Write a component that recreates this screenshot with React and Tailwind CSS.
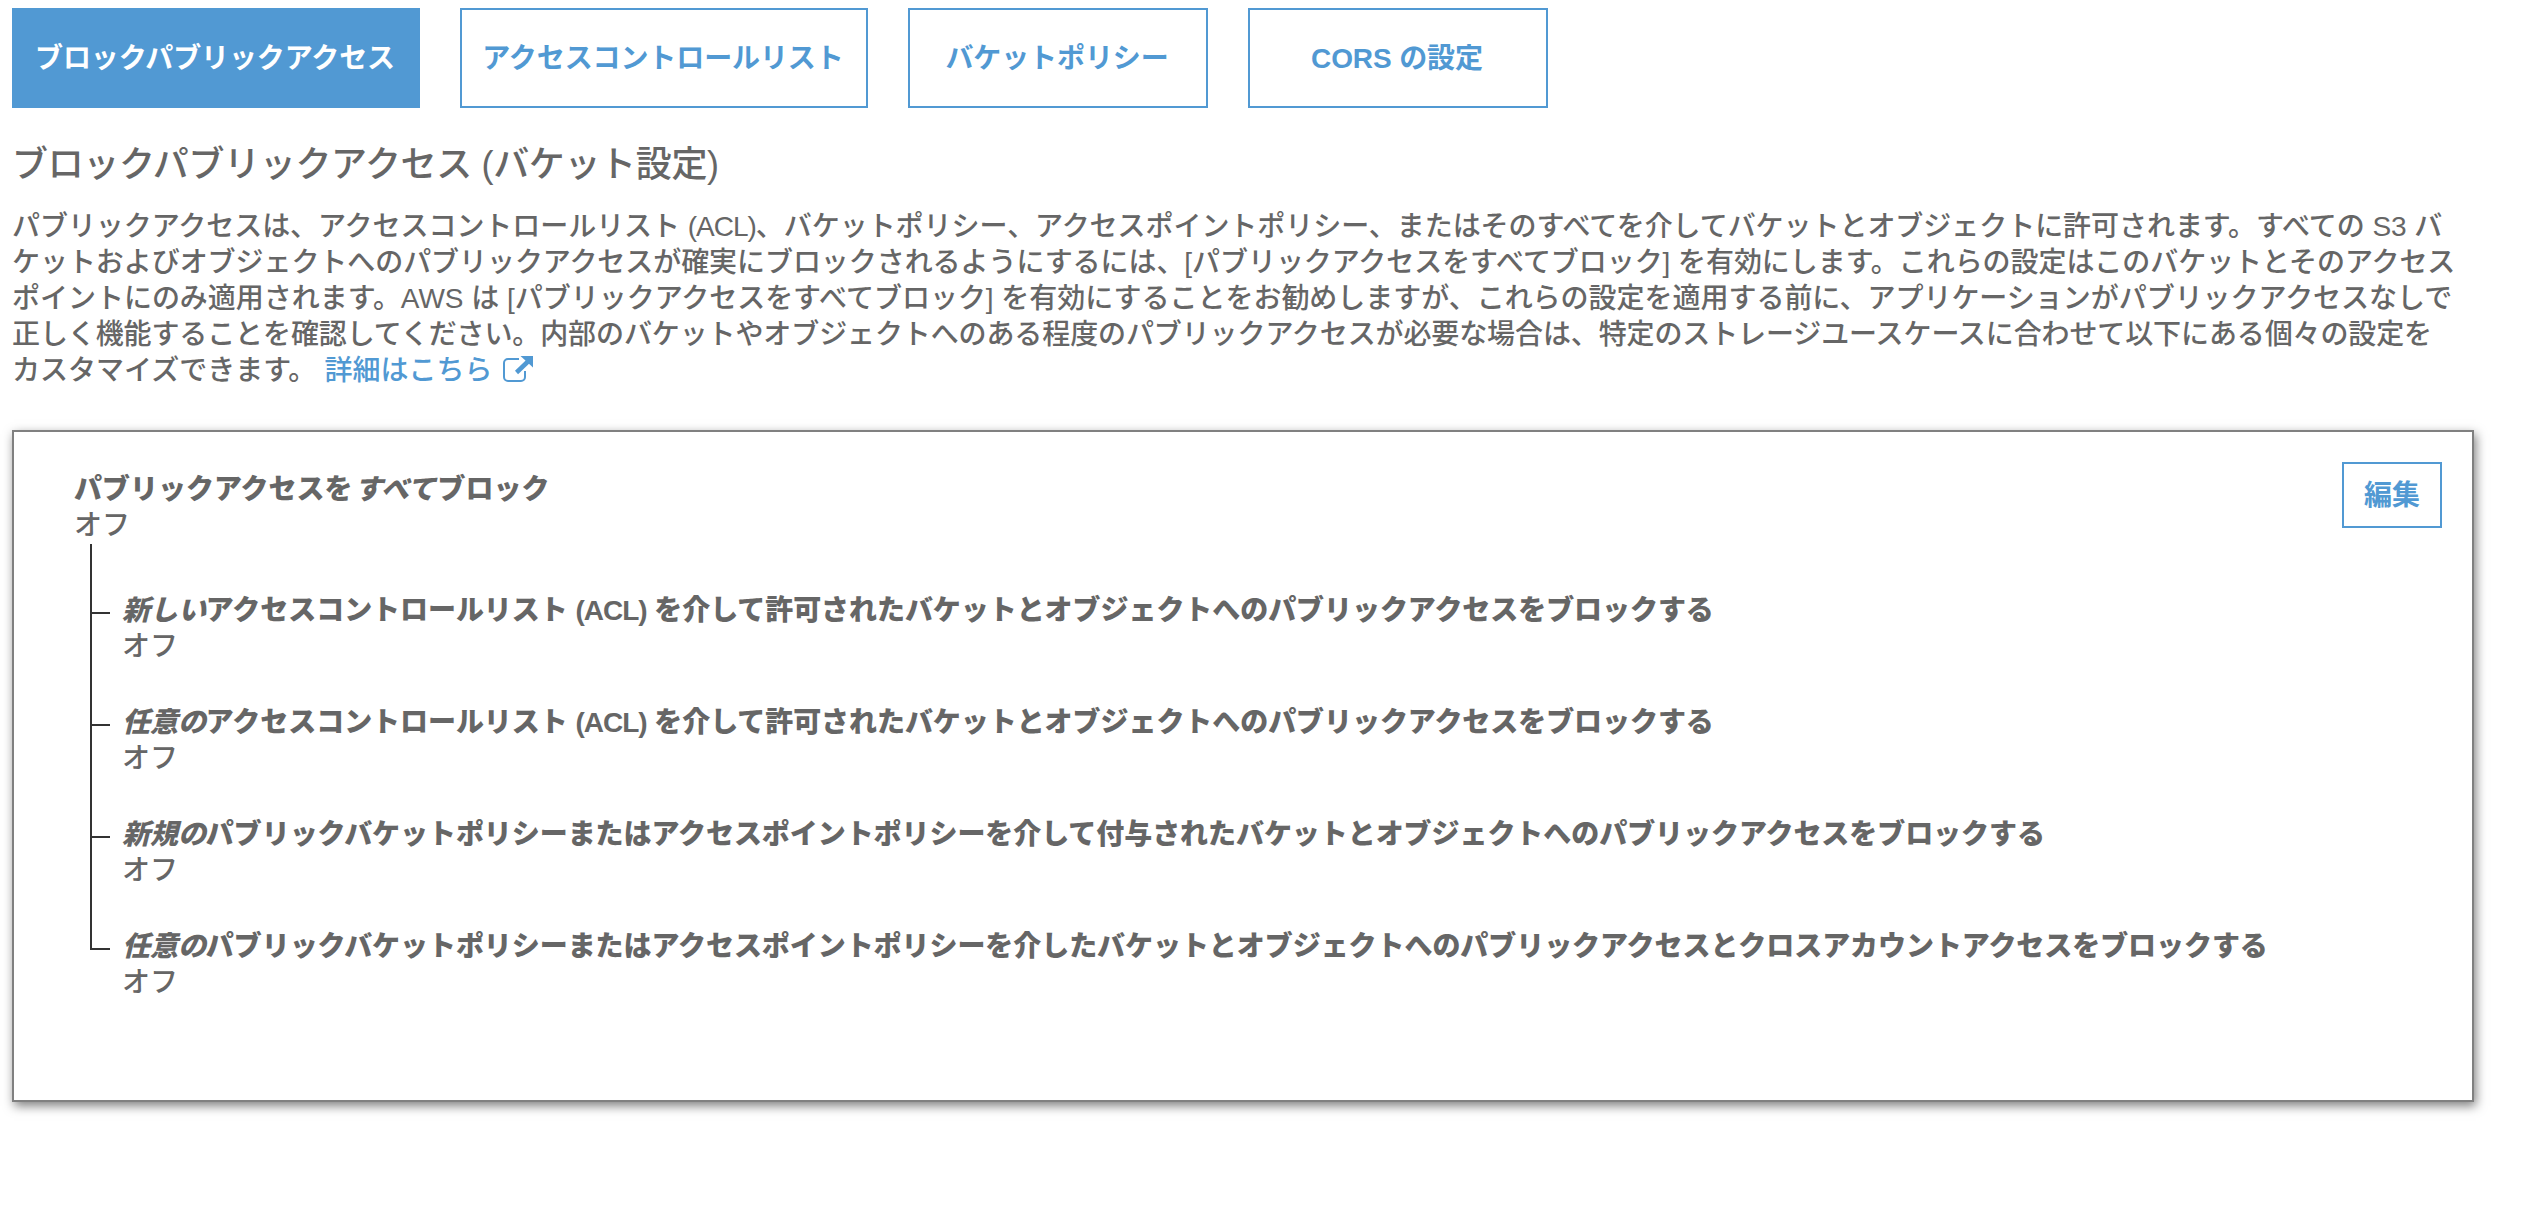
import clsx from 'clsx'

const TABS = [
  { label: 'ブロックパブリックアクセス', width: 'w-[408px]' },
  { label: 'アクセスコントロールリスト', width: 'w-[408px]' },
  { label: 'バケットポリシー',           width: 'w-[300px]' },
  { label: 'CORS の設定',                width: 'w-[300px]' },
]

const DESCRIPTION = [
  { tracking: 'tracking-[-0.05px]',  text: 'パブリックアクセスは、アクセスコントロールリスト (ACL)、バケットポリシー、アクセスポイントポリシー、またはそのすべてを介してバケットとオブジェクトに許可されます。すべての S3 バ' },
  { tracking: 'tracking-[-0.06px]',  text: 'ケットおよびオブジェクトへのパブリックアクセスが確実にブロックされるようにするには、[パブリックアクセスをすべてブロック] を有効にします。これらの設定はこのバケットとそのアクセス' },
  { tracking: 'tracking-[-0.025px]', text: 'ポイントにのみ適用されます。AWS は [パブリックアクセスをすべてブロック] を有効にすることをお勧めしますが、これらの設定を適用する前に、アプリケーションがパブリックアクセスなしで' },
  { tracking: 'tracking-[-0.11px]',  text: '正しく機能することを確認してください。内部のバケットやオブジェクトへのある程度のパブリックアクセスが必要な場合は、特定のストレージユースケースに合わせて以下にある個々の設定を' },
]

const SETTINGS = [
  { em: '新しい', text: 'アクセスコントロールリスト (ACL) を介して許可されたバケットとオブジェクトへのパブリックアクセスをブロックする' },
  { em: '任意の', text: 'アクセスコントロールリスト (ACL) を介して許可されたバケットとオブジェクトへのパブリックアクセスをブロックする' },
  { em: '新規の', text: 'パブリックバケットポリシーまたはアクセスポイントポリシーを介して付与されたバケットとオブジェクトへのパブリックアクセスをブロックする' },
  { em: '任意の', text: 'パブリックバケットポリシーまたはアクセスポイントポリシーを介したバケットとオブジェクトへのパブリックアクセスとクロスアカウントアクセスをブロックする' },
]

// Sets "(ACL)" a little tighter than the kana around it
function Acl({ children }) {
  return children.split(/(\(ACL\))/).map((part, i) =>
    part === '(ACL)' ? <span key={i} className="tracking-[-1px]">{part}</span> : part
  )
}

function ExternalIcon() {
  return (
    <svg className="ml-[11px] inline-block align-[-3px]" width="30" height="27" viewBox="0 0 30 27" fill="none">
      <path d="M16 3H5a4 4 0 0 0-4 4v14a4 4 0 0 0 4 4h13a4 4 0 0 0 4-4v-6" stroke="currentColor" strokeWidth="2" />
      <path d="M13.5 16.5 25 5.5" stroke="currentColor" strokeWidth="4.5" />
      <path d="M17.5 0H30v11.5z" fill="currentColor" />
    </svg>
  )
}

function Setting({ em, text, last }) {
  return (
    <li className="flex h-28">
      {/* Tree branch */}
      <div className="mr-3 flex w-5 flex-col">
        <div className="h-[62px] border-b-2 border-l-2 border-[#333]" />
        {!last && <div className="flex-1 border-l-2 border-[#333]" />}
      </div>
      <div className="pt-[41px]">
        <p className="font-black tracking-[-0.06px]"><em>{em}</em><Acl>{text}</Acl></p>
        <p>オフ</p>
      </div>
    </li>
  )
}

export default function App() {
  return (
    <div
      lang="ja"
      className="min-h-[1214px] w-[2526px] whitespace-nowrap bg-white pt-2 pl-3 font-['Liberation_Sans','Noto_Sans_CJK_JP',sans-serif] text-[28px] leading-9 font-medium text-[#666]"
    >
      <nav className="flex gap-10">
        {TABS.map(({ label, width }, i) => (
          <button
            key={label}
            className={clsx(
              'h-[100px] border-2 border-[#5199d3] pt-0.5 pr-0.5 font-bold tracking-[-0.1px]',
              width,
              i === 0 ? 'bg-[#5199d3] text-white' : 'bg-white text-[#5199d3]'
            )}
          >
            {label}
          </button>
        ))}
      </nav>

      <h2 className="mt-[33px] text-[36px] leading-[48px] tracking-[-0.35px]">ブロックパブリックアクセス (バケット設定)</h2>

      <div className="mt-5">
        {DESCRIPTION.map(({ text, tracking }) => (
          <p key={text} className={tracking}><Acl>{text}</Acl></p>
        ))}
        <p>
          カスタマイズできます。
          <a className="ml-2 text-[#5199d3]">詳細はこちら<ExternalIcon /></a>
        </p>
      </div>

      <section className="mt-[41px] flex h-[672px] w-[2462px] items-start justify-between border-2 border-[#808080] pt-[30px] pr-[30px] pl-[60px] shadow-[2px_4px_10px_rgba(0,0,0,0.5)]">
        <div className="pt-[10px]">
          <p className="font-black">パブリックアクセスを<em className="ml-0.5">すべて</em><span className="ml-0.5">ブロック</span></p>
          <p>オフ</p>
          <div className="ml-4 h-2 border-l-2 border-[#333]" />
          <ul className="ml-4">
            {SETTINGS.map((s, i) => (
              <Setting key={i} {...s} last={i === SETTINGS.length - 1} />
            ))}
          </ul>
        </div>
        <button className="h-[66px] w-[100px] border-2 border-[#5199d3] pt-0.5 font-bold text-[#5199d3]">編集</button>
      </section>
    </div>
  )
}
